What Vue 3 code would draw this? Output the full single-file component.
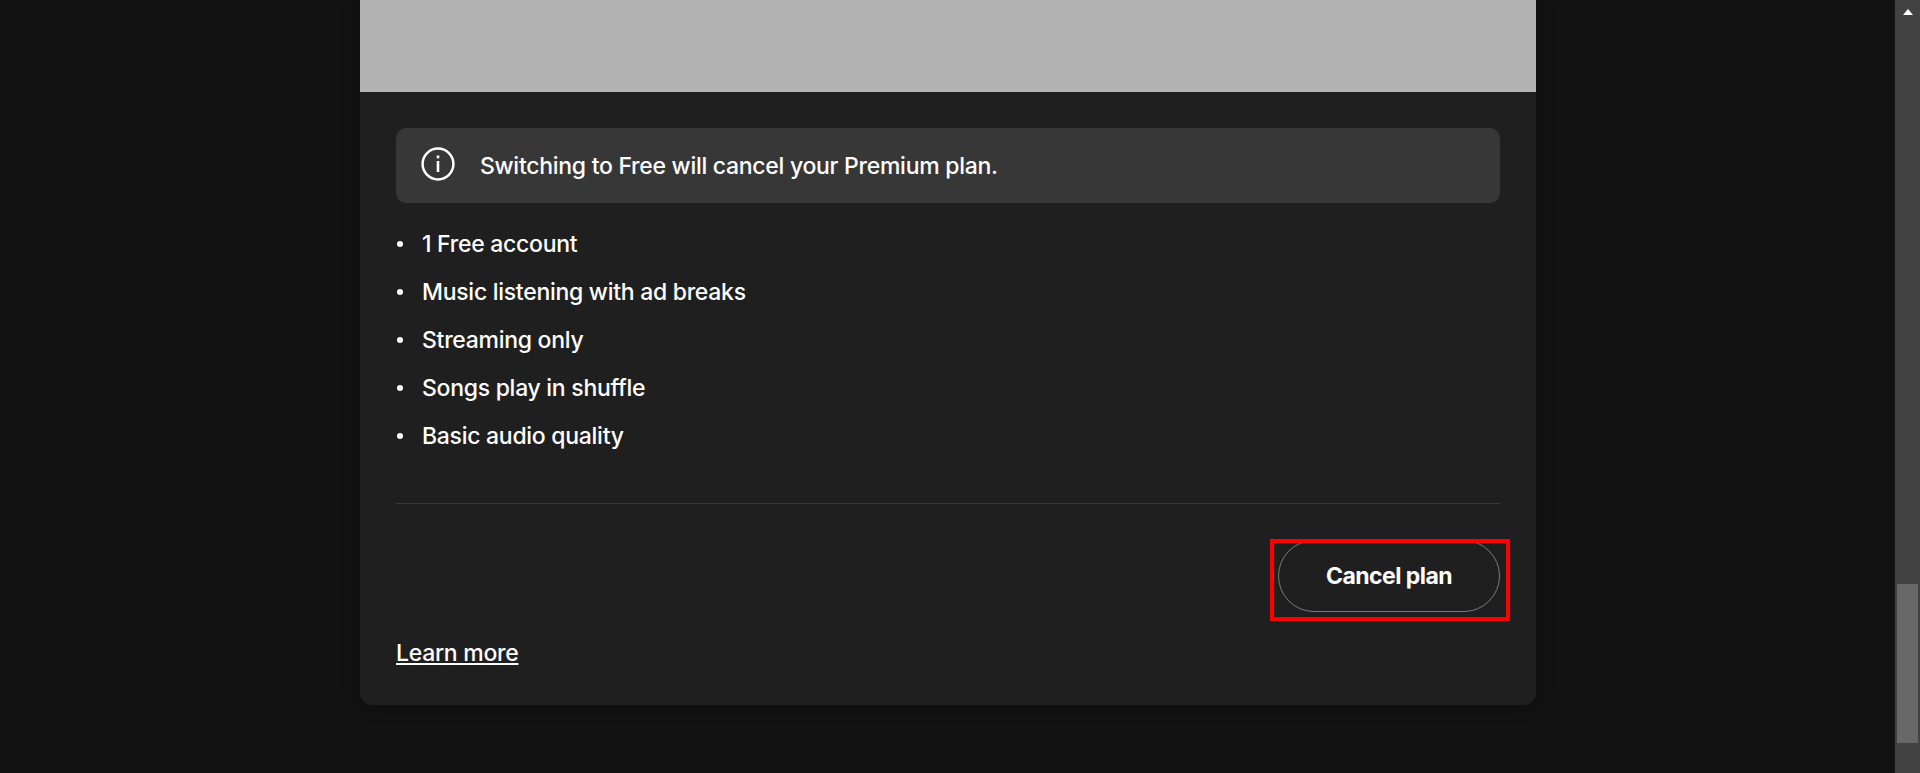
<script setup>
const features = [
  '1 Free account',
  'Music listening with ad breaks',
  'Streaming only',
  'Songs play in shuffle',
  'Basic audio quality',
]
</script>

<template>
  <div class="page">
    <main class="content">
      <section class="card">
        <div class="hero"></div>
        <div class="body">
          <div class="notice">
            <svg class="info" viewBox="0 0 34 34" width="34" height="34" fill="none" stroke="#fff">
              <circle cx="17" cy="17" r="15.4" stroke-width="2.5" />
              <path d="M17 14v11" stroke-width="2.6" />
              <path d="M17 8.5v2.8" stroke-width="2.6" />
            </svg>
            <span>Switching to Free will cancel your Premium plan.</span>
          </div>
          <ul class="features">
            <li v-for="f in features" :key="f">{{ f }}</li>
          </ul>
          <hr class="rule" />
          <div class="actions">
            <div class="btn-wrap">
              <button class="cancel">Cancel plan</button>
              <span class="highlight"></span>
            </div>
          </div>
          <a class="learn" href="#">Learn more</a>
        </div>
      </section>
    </main>
    <aside class="scrollbar">
      <div class="arrow"></div>
      <div class="track"><div class="thumb"></div></div>
    </aside>
  </div>
</template>

<style>
html, body { margin: 0; background: #121212; overflow: hidden; }
</style>

<style scoped>
.page {
  display: flex;
  height: 773px;
  overflow: hidden;
  background: #121212;
  color: #fff;
  font-family: "Inter", "Noto Sans", sans-serif;
  font-size: 23px;
  font-weight: 500;
  letter-spacing: -0.28px;
}
.content {
  flex: 1;
  display: flex;
  justify-content: center;
  align-items: flex-start;
  padding-left: 1px;
}
.card {
  width: 1176px;
  height: 705px;
  background: #1f1f1f;
  border-radius: 0 0 12px 12px;
  overflow: hidden;
  box-shadow: 0 0 20px rgba(0, 0, 0, 0.3);
}
.hero { height: 92px; background: #b3b3b3; }
.body { padding: 36px 36px 0; }
.notice {
  height: 75px;
  display: flex;
  align-items: center;
  gap: 25px;
  padding-left: 25px;
  background: #373737;
  border-radius: 10px;
}
.info { margin-top: -3px; }
.features {
  margin: 0;
  padding: 17px 0 0;
  list-style: none;
}
.features li {
  height: 48px;
  line-height: 48px;
  display: flex;
  align-items: center;
  gap: 19px;
}
.features li::before {
  content: "";
  width: 6px;
  height: 6px;
  margin-left: 1px;
  border-radius: 50%;
  background: #fff;
}
.rule {
  margin: 43px 0 0;
  border: 0;
  height: 1px;
  background: #3a3a3a;
}
.actions {
  display: flex;
  justify-content: flex-end;
  padding-top: 36px;
}
.btn-wrap { position: relative; display: flex; }
.cancel {
  width: 222px;
  height: 72px;
  border: 1px solid #7c7c7c;
  border-radius: 36px;
  background: transparent;
  color: #fff;
  font: 700 23px "Inter", sans-serif;
  letter-spacing: -0.55px;
}
.highlight {
  position: absolute;
  inset: -1px -10px -9px -8px;
  border: 4px solid #f00;
  pointer-events: none;
}
.learn {
  display: inline-block;
  margin-top: 27px;
  color: #fff;
  text-decoration: underline;
}
.scrollbar {
  width: 25px;
  display: flex;
  flex-direction: column;
  background: #424242;
}
.arrow {
  margin: 9px auto 0;
  width: 0;
  height: 0;
  border-left: 5.5px solid transparent;
  border-right: 5.5px solid transparent;
  border-bottom: 6px solid #fff;
}
.track { flex: 1; padding-top: 569px; }
.thumb { margin: 0 2px; height: 159px; background: #686868; }
</style>
